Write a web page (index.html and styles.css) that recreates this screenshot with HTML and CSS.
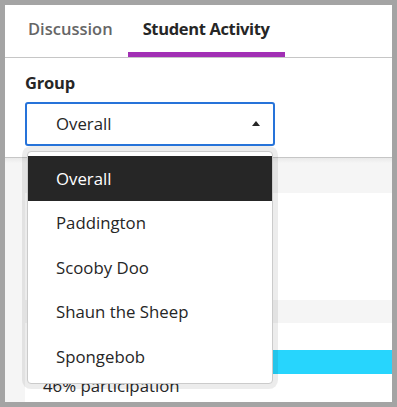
FILE: index.html
```html
<!DOCTYPE html>
<html lang="en">
<head>
<meta charset="utf-8">
<title>Student Activity</title>
<link rel="stylesheet" href="styles.css">
</head>
<body>
<div class="window">
  <header class="top">
    <nav class="tabs">
      <div class="tab">Discussion</div>
      <div class="tab tab-active">Student Activity</div>
    </nav>
    <div class="filter">
      <div class="filter-label">Group</div>
      <div class="select">
        <span class="select-value">Overall</span>
        <span class="caret"></span>
        <ul class="menu">
          <li class="menu-item selected">Overall</li>
          <li class="menu-item">Paddington</li>
          <li class="menu-item">Scooby Doo</li>
          <li class="menu-item">Shaun the Sheep</li>
          <li class="menu-item">Spongebob</li>
        </ul>
      </div>
    </div>
  </header>
  <main class="content">
    <section class="card">
      <div class="card-spacer"></div>
      <div class="card-band"></div>
      <div class="card-gap"></div>
      <div class="bar"></div>
      <div class="participation">46% participation</div>
    </section>
  </main>
</div>
</body>
</html>
```
FILE: styles.css
```css
* { box-sizing: border-box; }
html, body { margin: 0; padding: 0; }
body {
  font-family: "Open Sans", "Noto Sans", "Liberation Sans", sans-serif;
  color: #262626;
  background: #a4a4a4;
}
.window {
  width: 397px;
  height: 407px;
  border: 5px solid #a4a4a4;
  background: #ffffff;
  display: flex;
  flex-direction: column;
  overflow: hidden;
}
.top {
  background: #ffffff;
  border-bottom: 1px solid #c6c6c6;
  position: relative;
  z-index: 2;
}
.tabs {
  display: flex;
  padding-left: 8px;
  border-bottom: 1px solid #c6c6c6;
}
.tab {
  font-size: 16.5px;
  font-weight: 600;
  line-height: 24px;
  padding: 12px 15px 11px;
  border-bottom: 5px solid transparent;
  color: #666666;
  white-space: nowrap;
}
.tab-active {
  color: #262626;
  font-weight: 700;
  letter-spacing: -0.35px;
  border-bottom-color: #a12fb4;
}
.filter {
  padding: 13px 0 11px 20px;
}
.filter-label {
  font-size: 16.5px;
  font-weight: 700;
  line-height: 24px;
  letter-spacing: -0.2px;
  margin-bottom: 7px;
}
.select {
  position: relative;
  width: 250px;
  height: 44px;
  border: 2px solid #2673d9;
  border-radius: 3px;
  display: flex;
  align-items: center;
  justify-content: space-between;
  padding: 0 13px 0 29px;
}
.select-value {
  font-size: 16.8px;
  line-height: 24px;
}
.caret {
  width: 0;
  height: 0;
  border-left: 4.5px solid transparent;
  border-right: 4.5px solid transparent;
  border-bottom: 5px solid #262626;
  margin-top: -2px;
}
.menu {
  position: absolute;
  left: 0;
  top: calc(100% + 7px);
  width: 246px;
  margin: 0;
  padding: 4px 0 4px;
  list-style: none;
  background: #ffffff;
  border: 1px solid #cbcbcb;
  border-radius: 4px;
  box-shadow: 0 0 0 5px rgba(0, 0, 0, 0.075);
}
.menu-item {
  height: 44.5px;
  display: flex;
  align-items: center;
  padding-left: 28px;
  font-size: 16.8px;
  color: #262626;
}
.menu-item.selected {
  background: #262626;
  color: #ffffff;
}
.content {
  flex: 1;
  background: linear-gradient(#e9e9e9, #f5f5f5 5px);
  padding: 35px 0 0 20px;
  display: flex;
}
.card {
  flex: 1;
  background: #ffffff;
}
.card-spacer { height: 107px; }
.card-band { height: 23px; background: #f5f5f5; }
.card-gap { height: 27px; }
.bar {
  height: 24px;
  margin-left: 18px;
  background: #27d5fd;
}
.participation {
  padding-left: 18px;
  font-size: 16.8px;
  line-height: 24px;
  margin-top: 0;
}
```
